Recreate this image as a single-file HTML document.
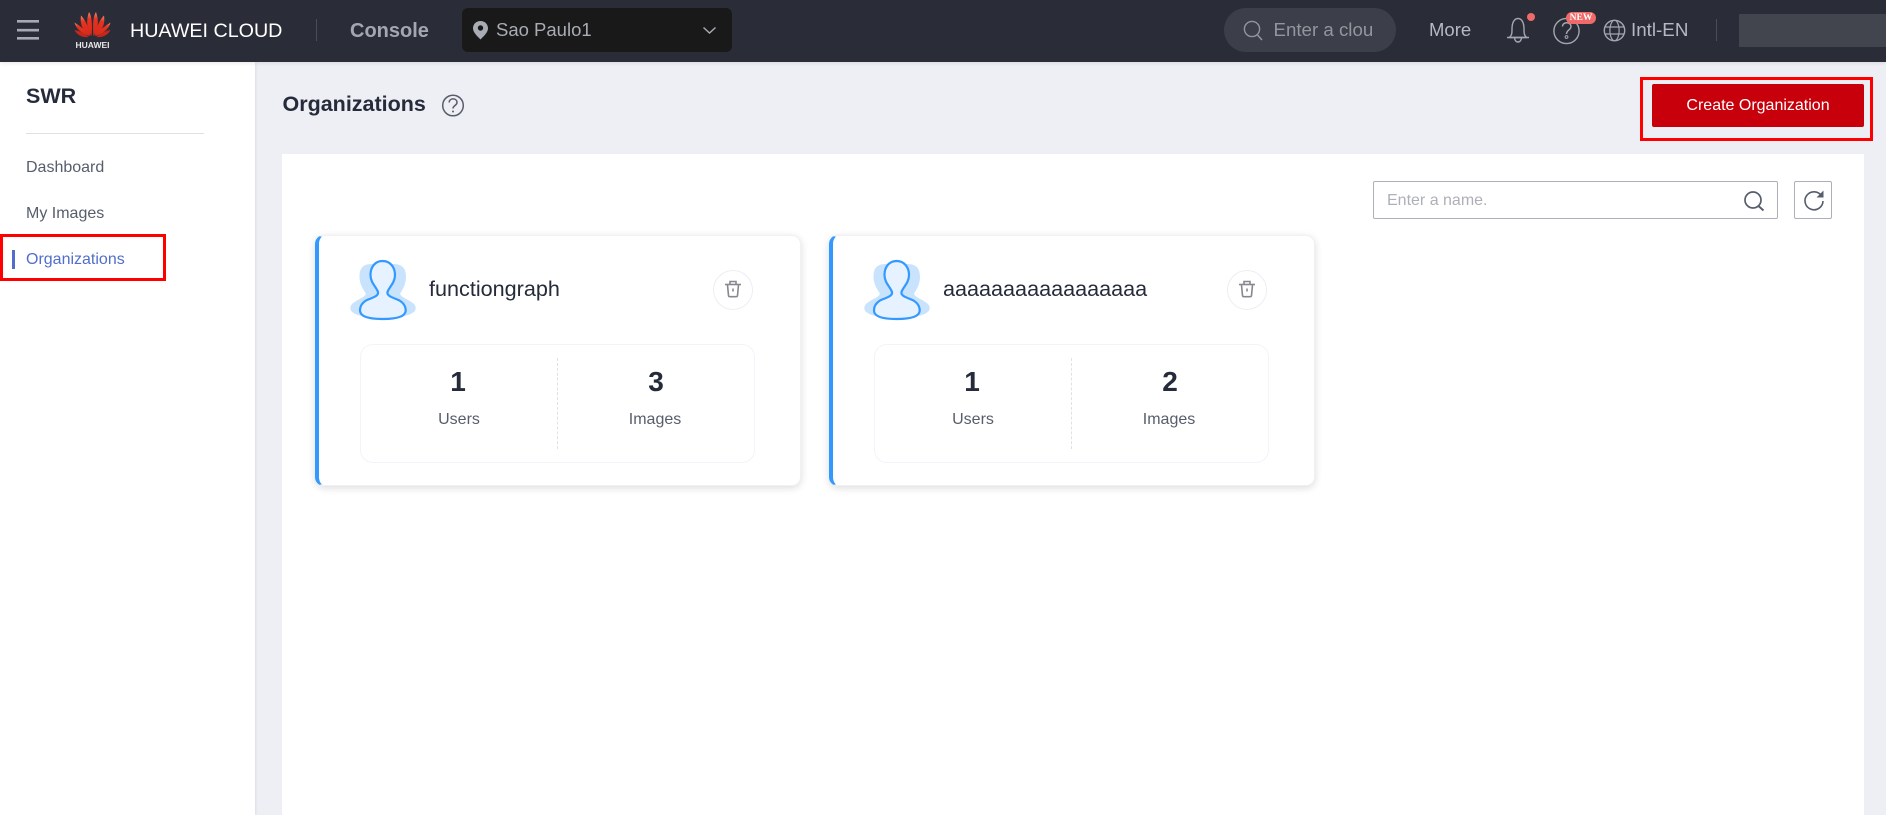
<!DOCTYPE html>
<html lang="en">
<head>
<meta charset="utf-8">
<title>Organizations</title>
<style>
html,body{margin:0;padding:0;width:1886px;height:815px;overflow:hidden;background:#eeeff4;font-family:"Liberation Sans",sans-serif;}
.t{position:absolute;white-space:nowrap;filter:blur(.3px);}
.b{position:absolute;box-sizing:border-box;}
svg{position:absolute;left:0;top:0;overflow:visible;}
.n{font-weight:bold;font-size:28px;line-height:30px;color:#252b3a;text-align:center;width:100px;}
.l{font-size:16px;line-height:20px;color:#575d6c;text-align:center;width:100px;}
</style>
</head>
<body>
<!-- header -->
<div class="b" style="left:0;top:0;width:1886px;height:62px;background:#2a2d37;box-shadow:0 1px 4px rgba(0,0,0,.1);z-index:3"></div>
<!-- sidebar -->
<div class="b" style="left:0;top:62px;width:255px;height:753px;background:#fff;box-shadow:1px 0 3px rgba(0,0,0,.07)"></div>
<!-- panel -->
<div class="b" style="left:282px;top:154px;width:1582px;height:661px;background:#fff"></div>

<div style="position:absolute;left:0;top:0;z-index:4">
<div class="b" style="left:462px;top:8px;width:270px;height:44px;background:#191919;border-radius:6px"></div>
<div class="b" style="left:1224px;top:8px;width:172px;height:44px;background:#3c3f49;border-radius:22px"></div>
<div class="b" style="left:316px;top:19px;width:1px;height:22px;background:#4a4d57"></div>
<div class="b" style="left:1716px;top:19px;width:1px;height:22px;background:#4a4d57"></div>
<div class="b" style="left:1739px;top:14px;width:147px;height:33px;background:#42454e"></div>
<div class="t" style="left:74px;top:40px;width:37px;text-align:center;font-size:8.5px;font-weight:bold;line-height:10px;color:#e8e8e8">HUAWEI</div>
<div class="t" style="left:130px;top:19px;font-size:19.7px;line-height:24px;color:#fff">HUAWEI CLOUD</div>
<div class="t" style="left:350px;top:19px;font-size:20px;line-height:24px;font-weight:bold;color:#a3a7b1">Console</div>
<div class="t" style="left:496px;top:19px;font-size:18.5px;line-height:22px;color:#a9acb4">Sao Paulo1</div>
<div class="t" style="left:1273.5px;top:19px;font-size:18.7px;line-height:22px;color:#93969e">Enter a clou</div>
<div class="t" style="left:1429px;top:19px;font-size:18.5px;line-height:22px;color:#b6b9c1">More</div>
<div class="t" style="left:1631px;top:19px;font-size:18.8px;line-height:22px;color:#b6b9c1">Intl-EN</div>

<svg width="1886" height="62" viewBox="0 0 1886 62" fill="none">
  <defs>
    <linearGradient id="pt" x1="0" y1="1" x2="0" y2="0">
      <stop offset="0" stop-color="#d42a1c"/><stop offset=".7" stop-color="#e8321f"/><stop offset="1" stop-color="#f08a70"/>
    </linearGradient>
  </defs>
  <!-- menu -->
  <path d="M17 21.3H39M17 30.2H39M17 38.3H39" stroke="#a7aab2" stroke-width="2.6"/>
  <!-- logo -->
  <g transform="translate(92.5 37)" fill="url(#pt)">
    <path d="M-1 -1C-5.5 -8 -6.8 -16 -3.5 -25C-.5 -21 0 -10 -1 -1Z"/>
    <path d="M1 -1C5.5 -8 6.8 -16 3.5 -25C.5 -21 0 -10 1 -1Z"/>
    <path d="M-2 -1C-9 -5 -13 -12 -11.5 -21.5C-8 -18 -3.5 -10 -2 -1Z"/>
    <path d="M2 -1C9 -5 13 -12 11.5 -21.5C8 -18 3.5 -10 2 -1Z"/>
    <path d="M-3 -.8C-10 -3 -16.5 -8 -18 -14.5C-13.5 -11.5 -6.5 -7 -3 -.8Z"/>
    <path d="M3 -.8C10 -3 16.5 -8 18 -14.5C13.5 -11.5 6.5 -7 3 -.8Z"/>
    <path d="M-4 0C-9 .8 -15.5 -1.5 -18 -7C-13 -6.3 -8 -3.5 -4 0Z" fill="#c9261a"/>
    <path d="M4 0C9 .8 15.5 -1.5 18 -7C13 -6.3 8 -3.5 4 0Z" fill="#c9261a"/>
  </g>
  <!-- pin -->
  <path d="M480.5 21C476 21 473 24.4 473 28.3C473 32.5 477.5 36.5 480.5 39.5C483.5 36.5 488 32.5 488 28.3C488 24.4 485 21 480.5 21Z" fill="#a9acb4"/>
  <circle cx="480.5" cy="28" r="2.7" fill="#191919"/>
  <!-- chevron -->
  <path d="M703.5 27.5L709.5 33L715.5 27.5" stroke="#a9acb4" stroke-width="1.4"/>
  <!-- search -->
  <circle cx="1252" cy="29" r="7.6" stroke="#92959d" stroke-width="1.4"/>
  <path d="M1257.5 35L1262 40" stroke="#92959d" stroke-width="1.5"/>
  <!-- bell -->
  <path d="M1509.5 37.5C1512 35 1512 33 1512 29C1512 23 1514 18.5 1518 18.5C1522 18.5 1524 23 1524 29C1524 33 1524 35 1526.5 37.5Z" stroke="#a4a7af" stroke-width="1.4" stroke-linejoin="round"/>
  <path d="M1507 37.5H1529" stroke="#a4a7af" stroke-width="1.4"/>
  <path d="M1514.5 37.5C1514.5 43.5 1521.5 43.5 1521.5 37.5" stroke="#a4a7af" stroke-width="1.4"/>
  <circle cx="1531" cy="17" r="4" fill="#f06a6a"/>
  <!-- help -->
  <circle cx="1566.5" cy="31" r="12.6" stroke="#a4a7af" stroke-width="1.4"/>
  <path d="M1562.5 26.5C1562.5 21.5 1571 21.5 1571 26.5C1571 30 1566.5 30 1566.5 34" stroke="#a4a7af" stroke-width="1.4"/>
  <circle cx="1566.5" cy="37" r="1.4" stroke="#a4a7af" stroke-width="1"/>
  <!-- globe -->
  <circle cx="1614.5" cy="30.5" r="10.2" stroke="#a4a7af" stroke-width="1.4"/>
  <ellipse cx="1614.5" cy="30.5" rx="4.6" ry="10.2" stroke="#a4a7af" stroke-width="1.2"/>
  <path d="M1604.5 27H1624.5M1604.5 34H1624.5" stroke="#a4a7af" stroke-width="1.2"/>
</svg>
<div class="b" style="left:1566px;top:12px;width:30px;height:12px;background:#f06a6a;border-radius:6px"></div>
<div class="t" style="left:1566px;top:12px;width:30px;text-align:center;font-family:'Liberation Serif',serif;font-weight:bold;font-size:9.5px;line-height:12px;color:#fff">NEW</div>
</div>

<!-- sidebar content -->
<div class="t" style="left:26px;top:84px;font-size:21.5px;line-height:24px;font-weight:bold;color:#252b3a">SWR</div>
<div class="b" style="left:26px;top:133px;width:178px;height:1px;background:#dfe1e6"></div>
<div class="t" style="left:26px;top:158px;font-size:16px;line-height:20px;color:#575d6c">Dashboard</div>
<div class="t" style="left:26px;top:204px;font-size:16px;line-height:20px;color:#575d6c">My Images</div>
<div class="t" style="left:26px;top:250px;font-size:16px;line-height:20px;color:#526ecc">Organizations</div>
<div class="b" style="left:12px;top:250px;width:3px;height:19px;background:#526ecc"></div>
<div class="b" style="left:0;top:234px;width:166px;height:47px;border:3px solid #f00"></div>

<!-- title -->
<div class="t" style="left:282.5px;top:91px;font-size:21.5px;line-height:26px;font-weight:bold;color:#252b3a">Organizations</div>
<svg width="1886" height="815" viewBox="0 0 1886 815" fill="none" style="z-index:1">
  <circle cx="453" cy="105.5" r="10.3" stroke="#575d6c" stroke-width="1.5"/>
  <path d="M449.2 102.5C449.2 97.7 457 97.7 457 102.5C457 105.5 453 105.5 453 108.5" stroke="#575d6c" stroke-width="1.5"/>
  <circle cx="453" cy="111.5" r="1" fill="#575d6c"/>
</svg>

<!-- create button -->
<div class="b" style="left:1640px;top:77px;width:233px;height:64px;border:3.5px solid #f00"></div>
<div class="b" style="left:1652px;top:84px;width:212px;height:43px;background:#c7000b;border-radius:2px"></div>
<div class="t" style="left:1652px;top:95.5px;width:212px;text-align:center;font-size:16px;line-height:20px;color:#fff">Create Organization</div>

<!-- search box -->
<div class="b" style="left:1373px;top:181px;width:405px;height:38px;border:1px solid #adb0b8;border-radius:2px;background:#fff"></div>
<div class="t" style="left:1387px;top:190.5px;font-size:16px;line-height:20px;color:#adb0b8">Enter a name.</div>
<div class="b" style="left:1794px;top:181px;width:38px;height:38px;border:1px solid #adb0b8;border-radius:2px;background:#fff"></div>
<svg width="1886" height="815" viewBox="0 0 1886 815" fill="none" style="z-index:1">
  <circle cx="1753" cy="200" r="8" stroke="#575d6c" stroke-width="1.7"/>
  <path d="M1758.5 206L1763.5 210.5" stroke="#575d6c" stroke-width="1.9"/>
  <path d="M1821.3 195.5A9 9 0 1 0 1823 201" stroke="#575d6c" stroke-width="1.6"/>
  <path d="M1823.5 190.5V197.5H1816.5Z" fill="#575d6c"/>
</svg>

<!-- card 1 -->
<div class="b" style="left:315px;top:235px;width:486px;height:251px;background:#fff;border:1px solid #f0f1f5;border-left:4px solid #3399ff;border-radius:9px;box-shadow:0 2px 8px rgba(0,0,0,.14)"></div>
<div class="t" style="left:429px;top:276px;font-size:21.6px;line-height:26px;color:#252b3a">functiongraph</div>
<div class="b" style="left:713px;top:270px;width:40px;height:40px;border:1px solid #eceef3;border-radius:50%"></div>
<div class="b" style="left:360px;top:344px;width:395px;height:119px;border:1.5px solid #f3f4f9;border-radius:13px"></div>
<div class="b" style="left:557px;top:358px;width:0;height:91px;border-left:1px dashed #dfe1e6"></div>
<div class="t n" style="left:408px;top:366.5px">1</div>
<div class="t n" style="left:606px;top:366.5px">3</div>
<div class="t l" style="left:409px;top:409.5px">Users</div>
<div class="t l" style="left:605px;top:409.5px">Images</div>

<!-- card 2 -->
<div class="b" style="left:829px;top:235px;width:486px;height:251px;background:#fff;border:1px solid #f0f1f5;border-left:4px solid #3399ff;border-radius:9px;box-shadow:0 2px 8px rgba(0,0,0,.14)"></div>
<div class="t" style="left:943px;top:276px;font-size:21.6px;line-height:26px;color:#252b3a">aaaaaaaaaaaaaaaaa</div>
<div class="b" style="left:1227px;top:270px;width:40px;height:40px;border:1px solid #eceef3;border-radius:50%"></div>
<div class="b" style="left:874px;top:344px;width:395px;height:119px;border:1.5px solid #f3f4f9;border-radius:13px"></div>
<div class="b" style="left:1071px;top:358px;width:0;height:91px;border-left:1px dashed #dfe1e6"></div>
<div class="t n" style="left:922px;top:366.5px">1</div>
<div class="t n" style="left:1120px;top:366.5px">2</div>
<div class="t l" style="left:923px;top:409.5px">Users</div>
<div class="t l" style="left:1119px;top:409.5px">Images</div>

<svg width="1886" height="815" viewBox="0 0 1886 815" fill="none" style="z-index:1">
  <path d="M372 264C363 264 359.5 268 359.5 277C359.5 285 364 290 366 294C364 298 356 300 352 304C348 309 351 314 362 316C375 318 392 318 404 316C415 314 418 309 414 304C410 300 402 298 400 294C402 290 406 285 406 277C406 268 402 264 393 264Z" fill="#c9e3fd"/>
  <path d="M382.7 261C375 261 370.5 267 370.5 275C370.5 283 376.5 287 378 292C379 296.5 371 298 366 300.5C362 303 360 306 360 310.5C360 317 370 319 382.7 319C395 319 405.7 317 405.7 310.5C405.7 306 403.5 303 399.5 300.5C394.5 298 386.5 296.5 387.5 292C389 287 395 283 395 275C395 267 390 261 382.7 261Z" fill="#e6f2ff" stroke="#3399ff" stroke-width="2.2"/>
  <g stroke="#85888f" stroke-width="1.6">
    <path d="M725 284.5H741"/>
    <path d="M730 284V281.5H736V284"/>
    <path d="M727.5 285L728.5 295.5C728.6 296.3 729 296.7 730 296.7H736C737 296.7 737.4 296.3 737.5 295.5L738.5 285"/>
    <path d="M733 288.5V291.5"/>
  </g>
  <g transform="translate(514 0)">
    <path d="M372 264C363 264 359.5 268 359.5 277C359.5 285 364 290 366 294C364 298 356 300 352 304C348 309 351 314 362 316C375 318 392 318 404 316C415 314 418 309 414 304C410 300 402 298 400 294C402 290 406 285 406 277C406 268 402 264 393 264Z" fill="#c9e3fd"/>
    <path d="M382.7 261C375 261 370.5 267 370.5 275C370.5 283 376.5 287 378 292C379 296.5 371 298 366 300.5C362 303 360 306 360 310.5C360 317 370 319 382.7 319C395 319 405.7 317 405.7 310.5C405.7 306 403.5 303 399.5 300.5C394.5 298 386.5 296.5 387.5 292C389 287 395 283 395 275C395 267 390 261 382.7 261Z" fill="#e6f2ff" stroke="#3399ff" stroke-width="2.2"/>
    <g stroke="#85888f" stroke-width="1.6">
      <path d="M725 284.5H741"/>
      <path d="M730 284V281.5H736V284"/>
      <path d="M727.5 285L728.5 295.5C728.6 296.3 729 296.7 730 296.7H736C737 296.7 737.4 296.3 737.5 295.5L738.5 285"/>
      <path d="M733 288.5V291.5"/>
    </g>
  </g>
</svg>
</body>
</html>
